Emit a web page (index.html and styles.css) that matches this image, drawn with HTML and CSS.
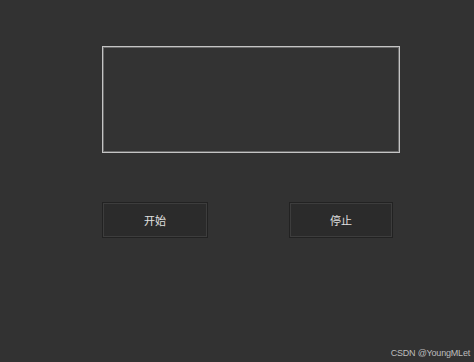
FILE: index.html
```html
<!DOCTYPE html>
<html>
<head>
<meta charset="utf-8">
<link rel="stylesheet" href="styles.css">
</head>
<body>
<div class="page">
  <div class="display"></div>
  <div class="buttons">
    <button class="btn btn-start">开始</button>
    <button class="btn btn-stop">停止</button>
  </div>
</div>
<div class="watermark">CSDN @YoungMLet</div>
</body>
</html>
```
FILE: styles.css
```css
html, body {
  margin: 0;
  padding: 0;
  width: 474px;
  height: 362px;
  background: #323232;
  overflow: hidden;
  font-family: "Noto Sans CJK SC", "Liberation Sans", sans-serif;
}
.page {
  display: flex;
  flex-direction: column;
  padding: 46px 0 0 102px;
}
.display {
  box-sizing: border-box;
  width: 298px;
  height: 107px;
  border: 1px solid #c4c4c4;
  box-shadow: inset 0 0 0 1px #6a6a6a;
  background: #333333;
}
.buttons {
  display: flex;
  margin-top: 49px;
  gap: 81px;
}
.btn {
  box-sizing: border-box;
  height: 36px;
  background: #2b2b2b;
  border: 1px solid #222222;
  box-shadow: inset 0 0 0 1px #3d3d3d;
  color: #e0e0e0;
  font-family: "Noto Sans CJK SC", sans-serif;
  font-size: 11px;
  padding: 0;
  display: flex;
  align-items: center;
  justify-content: center;
}
.btn-start { width: 106px; }
.btn-stop { width: 104px; }
.watermark {
  position: absolute;
  right: 4px;
  bottom: 4px;
  font-family: "Liberation Sans", sans-serif;
  font-size: 9px;
  letter-spacing: -0.2px;
  color: #bdbdbd;
}
```
